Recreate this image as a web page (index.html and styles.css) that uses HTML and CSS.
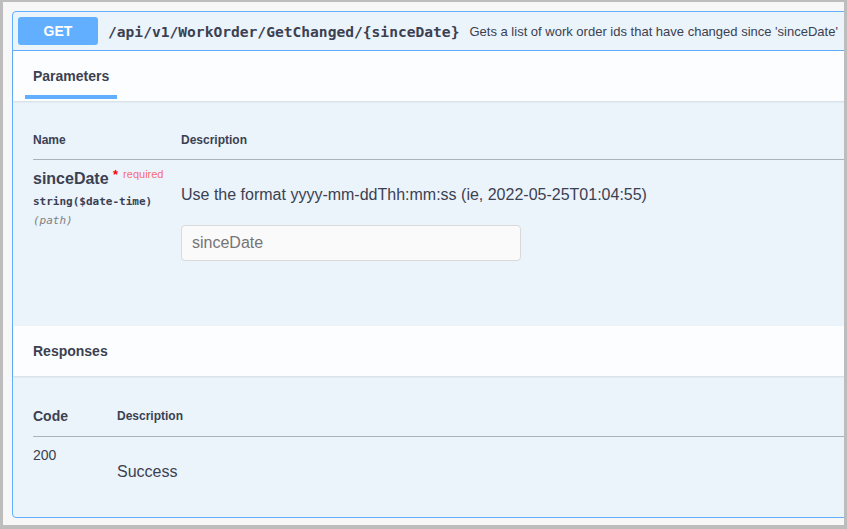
FILE: index.html
```html
<!DOCTYPE html>
<html lang="en">
  <head>
    <meta charset="UTF-8" />
    <meta name="viewport" content="width=device-width, initial-scale=1.0" />
    <title>WorkOrder - GetChanged</title>
    <link rel="stylesheet" href="styles.css">
  </head>
  <body>
    <div class="frame">
      <div class="opblock opblock-get">
        <div class="opblock-summary">
          <span class="method">GET</span>
          <span class="path">/api/v1/WorkOrder/GetChanged/{sinceDate}</span>
          <span class="summary-description">Gets a list of work order ids that have changed since 'sinceDate'</span>
        </div>

        <div class="section-header">
          <h4 class="tab-item active"><span>Parameters</span></h4>
        </div>
        <div class="section-body params">
          <table class="parameters">
            <thead>
              <tr>
                <th class="col-name">Name</th>
                <th>Description</th>
              </tr>
            </thead>
            <tbody>
              <tr>
                <td class="col-name">
                  <div class="param-name">sinceDate <span class="star">*</span><span class="required">required</span></div>
                  <div class="param-type">string($date-time)</div>
                  <div class="param-in">(path)</div>
                </td>
                <td>
                  <p class="markdown">Use the format yyyy-mm-ddThh:mm:ss (ie, 2022-05-25T01:04:55)</p>
                  <input type="text" class="param-input" placeholder="sinceDate" />
                </td>
              </tr>
            </tbody>
          </table>
        </div>

        <div class="section-header">
          <h4 class="responses-title">Responses</h4>
        </div>
        <div class="section-body responses">
          <table class="responses-table">
            <thead>
              <tr>
                <th class="col-code">Code</th>
                <th class="col-desc">Description</th>
              </tr>
            </thead>
            <tbody>
              <tr>
                <td class="col-code status">200</td>
                <td><p class="markdown">Success</p></td>
              </tr>
            </tbody>
          </table>
        </div>
      </div>
    </div>
  </body>
</html>
```

FILE: styles.css
```css
body {
  margin: 0;
  font-family: "Liberation Sans", Arial, sans-serif;
  color: #3b4151;
}

.frame {
  width: 847px;
  height: 529px;
  box-sizing: border-box;
  border: solid #bdbdbd;
  border-width: 2px 3px 4px 3px;
  background-color: #f7f7f7;
  padding: 9px 0 0 9px;
  overflow: hidden;
}

.opblock {
  width: 870px;
  height: 507px;
  box-sizing: border-box;
  border: 1px solid #61affe;
  border-radius: 4px;
  background-color: #ebf3fb;
  display: flex;
  flex-direction: column;
}

/* summary bar */
.opblock-summary {
  display: flex;
  align-items: center;
  padding: 5px;
  border-bottom: 1px solid #61affe;
}

.method {
  width: 80px;
  height: 28px;
  line-height: 28px;
  border-radius: 3px;
  background-color: #61affe;
  color: #fff;
  font-size: 14px;
  font-weight: 700;
  text-align: center;
}

.path {
  padding: 0 10px;
  font-family: "DejaVu Sans Mono", monospace;
  font-size: 14.6px;
  font-weight: 700;
  color: #3b4151;
}

.summary-description {
  font-size: 13px;
  color: #3b4151;
  white-space: nowrap;
}

/* section headers */
.section-header {
  height: 50px;
  box-sizing: border-box;
  padding: 0 12px;
  display: flex;
  align-items: center;
  background-color: rgba(255, 255, 255, 0.8);
  box-shadow: 0 1px 2px rgba(0, 0, 0, 0.1);
}

.section-header h4 {
  margin: 0;
  font-size: 14px;
  font-weight: 700;
}

.tab-item span {
  position: relative;
  display: inline-block;
  padding: 0 8px;
}

.tab-item.active span:after {
  content: "";
  position: absolute;
  left: 0;
  right: 0;
  bottom: -15px;
  height: 4px;
  background-color: #61affe;
}

.responses-title {
  padding-left: 8px;
}

.section-body {
  padding: 20px 0 0 20px;
}

.params {
  height: 225px;
  box-sizing: border-box;
}

/* tables */
table {
  width: 100%;
  border-collapse: collapse;
}

th {
  padding: 12px 0;
  text-align: left;
  font-size: 12px;
  font-weight: 700;
  line-height: 14px;
  border-bottom: 1px solid rgba(59, 65, 81, 0.2);
}

td {
  padding: 10px 0 0;
  vertical-align: top;
}

.parameters .col-name {
  width: 148px;
}

.param-name {
  font-size: 16px;
  font-weight: 700;
  line-height: 18px;
}

.star {
  position: relative;
  top: -5px;
  color: #ff0000;
  font-size: 13px;
}

.required {
  position: relative;
  top: -6px;
  margin-left: 5px;
  font-size: 11px;
  font-weight: 400;
  color: rgba(255, 0, 0, 0.6);
}

.param-type {
  margin-top: 4px;
  font-family: "DejaVu Sans Mono", monospace;
  font-size: 11px;
  font-weight: 600;
  line-height: 18px;
}

.param-in {
  margin-top: 1px;
  font-family: "DejaVu Sans Mono", monospace;
  font-size: 11px;
  font-style: italic;
  line-height: 18px;
  color: gray;
}

.markdown {
  margin: 15px 0 0;
  font-size: 16px;
  line-height: 20px;
}

.param-input {
  display: block;
  margin-top: 20px;
  width: 340px;
  height: 36px;
  box-sizing: border-box;
  padding: 0 10px;
  border: 1px solid #d9d9d9;
  border-radius: 4px;
  background-color: #fafafa;
  font-family: "Liberation Sans", Arial, sans-serif;
  font-size: 16px;
  color: #3b4151;
}

.param-input::placeholder {
  color: #757575;
}

.responses-table th {
  padding: 13px 0;
}

.responses-table .col-code {
  width: 84px;
}

.responses-table th.col-code {
  font-size: 14px;
}

.status {
  font-size: 14px;
  line-height: 16px;
}
```
